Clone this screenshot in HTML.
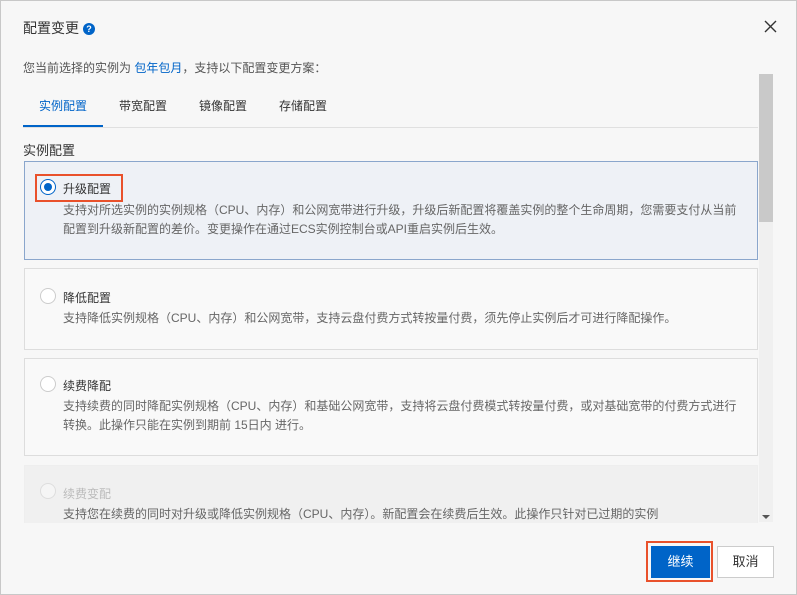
<!DOCTYPE html>
<html><head><meta charset="utf-8"><style>
*{box-sizing:border-box;margin:0;padding:0}
body{width:797px;height:595px;background:#f7f7f7;font-family:"Liberation Sans","Noto Sans CJK SC",sans-serif;position:relative;overflow:hidden;color:#333}
.dlg{position:absolute;left:0;top:0;width:797px;height:595px;border:1px solid #c8c8c8;background:#f7f7f7}
.t{position:absolute;left:22px;top:17px;font-size:14px;color:#333}
.q{display:inline-block;width:12px;height:12px;border-radius:50%;background:#0064c8;color:#fff;font-size:9px;text-align:center;line-height:12px;font-weight:bold;vertical-align:1px;margin-left:4px}
.x{position:absolute;left:763px;top:19px}
.sub{position:absolute;left:22px;top:58px;font-size:12px;color:#555}
.sub a{color:#0064c8}
.tabs{position:absolute;left:22px;top:96px;width:735px;height:31px;border-bottom:1px solid #e0e0e0;font-size:12px}
.tab{position:absolute;top:0;color:#333}
.act{color:#0064c8}
.ul{position:absolute;left:0;top:28px;width:80px;height:2px;background:#0064c8}
.sec{position:absolute;left:22px;top:139px;font-size:13px;color:#333}
.card{position:absolute;left:23px;width:734px;border:1px solid #ddd;background:#f9f9f9}
.card .h{position:absolute;left:38px;top:12px;font-size:12px;color:#333}
.card .d{position:absolute;left:38px;top:33px;font-size:12px;color:#666;line-height:19px;width:682px}
.r{position:absolute;left:15px;top:14px;width:16px;height:16px;border-radius:50%;border:1px solid #ccc;background:#fff}
.sb{position:absolute;left:758px;top:73px;width:14px;height:448px;background:#f0f0f0}
.th{position:absolute;left:0;top:0;width:14px;height:148px;background:#c9c9c9}
.btn{position:absolute;top:545px;height:32px;font-size:13px;text-align:center;line-height:30px}
</style></head><body><div class="dlg">
<div class="t">配置变更<span class="q">?</span></div>
<svg class="x" width="13" height="13" viewBox="0 0 13 13"><path d="M1 1L12 12M12 1L1 12" stroke="#333" stroke-width="1.4"/></svg>
<div class="sub">您当前选择的实例为 <a>包年包月</a>，支持以下配置变更方案：</div>
<div class="tabs"><span class="tab act" style="left:16px">实例配置</span><span class="tab" style="left:96px">带宽配置</span><span class="tab" style="left:176px">镜像配置</span><span class="tab" style="left:256px">存储配置</span><div class="ul"></div></div>
<div class="sec">实例配置</div>
<div class="card" style="top:160px;height:99px;background:#eef1f6;border-color:#8aa6cc">
<div class="r" style="left:15px;top:17px;border:1px solid #0064c8"><div style="position:absolute;left:3px;top:3px;width:8px;height:8px;border-radius:50%;background:#0064c8"></div></div>
<div style="position:absolute;left:10px;top:12px;width:88px;height:28px;border:2px solid #e9512b"></div>
<div class="h" style="left:38px;top:18px">升级配置</div>
<div class="d" style="top:39px">支持对所选实例的实例规格（CPU、内存）和公网宽带进行升级，升级后新配置将覆盖实例的整个生命周期，您需要支付从当前<br>配置到升级新配置的差价。变更操作在通过ECS实例控制台或API重启实例后生效。</div></div>
<div class="card" style="top:267px;height:82px"><div class="r" style="top:19px"></div><div class="h" style="top:20px">降低配置</div><div class="d" style="top:40px">支持降低实例规格（CPU、内存）和公网宽带，支持云盘付费方式转按量付费，须先停止实例后才可进行降配操作。</div></div>
<div class="card" style="top:357px;height:98px"><div class="r" style="top:17px"></div><div class="h" style="top:18px">续费降配</div><div class="d" style="top:38px">支持续费的同时降配实例规格（CPU、内存）和基础公网宽带，支持将云盘付费模式转按量付费，或对基础宽带的付费方式进行<br>转换。此操作只能在实例到期前 15日内 进行。</div></div>
<div class="card" style="top:464px;height:58px;background:#f0f0f0;border-color:#eee;border-bottom:none"><div class="r" style="top:17px;border-color:#ddd;background:#f5f5f5"></div><div class="h" style="top:19px;color:#bbb">续费变配</div><div class="d" style="top:39px">支持您在续费的同时对升级或降低实例规格（CPU、内存）。新配置会在续费后生效。此操作只针对已过期的实例</div></div>
<div class="sb"><div class="th"></div><div style="position:absolute;left:3px;bottom:3px;border:4px solid transparent;border-top:4px solid #555;border-bottom:none"></div></div>
<div style="position:absolute;left:645px;top:540px;width:67px;height:41px;border:2px solid #e9512b"></div>
<div class="btn" style="left:650px;width:59px;background:#0064c8;color:#fff;border:1px solid #0064c8">继续</div>
<div class="btn" style="left:716px;width:57px;background:#fff;border:1px solid #ccc;color:#333">取消</div>
</div></body></html>
